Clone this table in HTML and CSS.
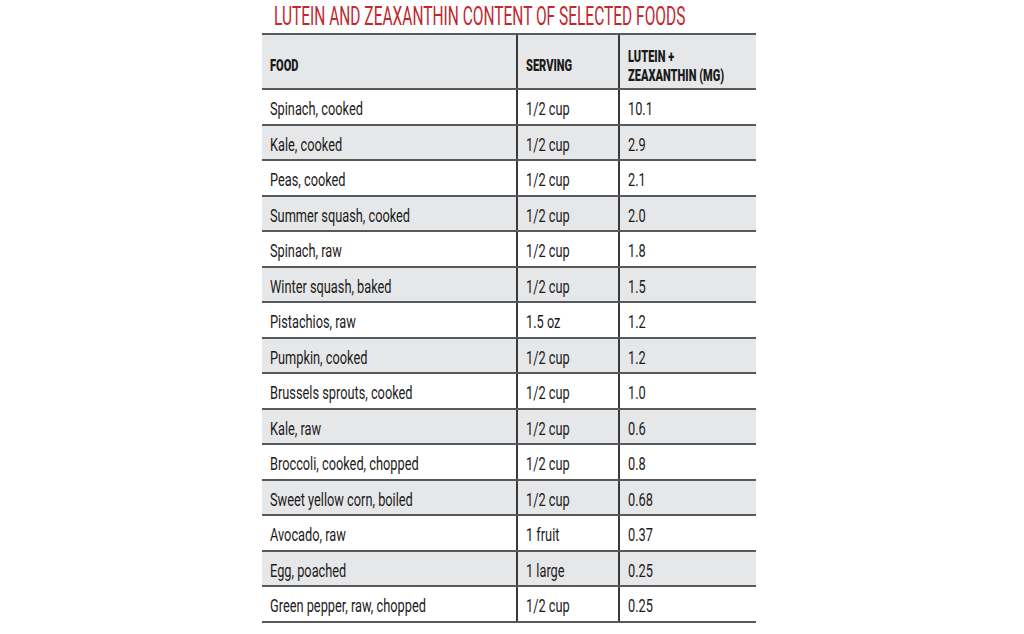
FILE: index.html
```html
<!DOCTYPE html>
<html lang="en">
<head>
<meta charset="utf-8">
<title>Lutein and Zeaxanthin Content of Selected Foods</title>
<link rel="stylesheet" href="styles.css">
</head>
<body>
<div class="page">
  <div class="chart">
    <h1 class="title"><span class="narrow-title">LUTEIN AND ZEAXANTHIN CONTENT OF SELECTED FOODS</span></h1>
    <table class="foods">
      <thead>
        <tr>
          <th class="c-food"><span class="narrow-head">FOOD</span></th>
          <th class="c-serv"><span class="narrow-head">SERVING</span></th>
          <th class="c-amt"><span class="narrow-head">LUTEIN +<br>ZEAXANTHIN (MG)</span></th>
        </tr>
      </thead>
      <tbody>
        <tr><td><span class="narrow">Spinach, cooked</span></td><td><span class="narrow">1/2 cup</span></td><td><span class="narrow">10.1</span></td></tr>
        <tr><td><span class="narrow">Kale, cooked</span></td><td><span class="narrow">1/2 cup</span></td><td><span class="narrow">2.9</span></td></tr>
        <tr><td><span class="narrow">Peas, cooked</span></td><td><span class="narrow">1/2 cup</span></td><td><span class="narrow">2.1</span></td></tr>
        <tr><td><span class="narrow">Summer squash, cooked</span></td><td><span class="narrow">1/2 cup</span></td><td><span class="narrow">2.0</span></td></tr>
        <tr><td><span class="narrow">Spinach, raw</span></td><td><span class="narrow">1/2 cup</span></td><td><span class="narrow">1.8</span></td></tr>
        <tr><td><span class="narrow">Winter squash, baked</span></td><td><span class="narrow">1/2 cup</span></td><td><span class="narrow">1.5</span></td></tr>
        <tr><td><span class="narrow">Pistachios, raw</span></td><td><span class="narrow">1.5 oz</span></td><td><span class="narrow">1.2</span></td></tr>
        <tr><td><span class="narrow">Pumpkin, cooked</span></td><td><span class="narrow">1/2 cup</span></td><td><span class="narrow">1.2</span></td></tr>
        <tr><td><span class="narrow">Brussels sprouts, cooked</span></td><td><span class="narrow">1/2 cup</span></td><td><span class="narrow">1.0</span></td></tr>
        <tr><td><span class="narrow">Kale, raw</span></td><td><span class="narrow">1/2 cup</span></td><td><span class="narrow">0.6</span></td></tr>
        <tr><td><span class="narrow">Broccoli, cooked, chopped</span></td><td><span class="narrow">1/2 cup</span></td><td><span class="narrow">0.8</span></td></tr>
        <tr><td><span class="narrow">Sweet yellow corn, boiled</span></td><td><span class="narrow">1/2 cup</span></td><td><span class="narrow">0.68</span></td></tr>
        <tr><td><span class="narrow">Avocado, raw</span></td><td><span class="narrow">1 fruit</span></td><td><span class="narrow">0.37</span></td></tr>
        <tr><td><span class="narrow">Egg, poached</span></td><td><span class="narrow">1 large</span></td><td><span class="narrow">0.25</span></td></tr>
        <tr><td><span class="narrow">Green pepper, raw, chopped</span></td><td><span class="narrow">1/2 cup</span></td><td><span class="narrow">0.25</span></td></tr>
      </tbody>
    </table>
  </div>
</div>
</body>
</html>
```
FILE: styles.css
```css
html, body {
  margin: 0;
  padding: 0;
  background: #ffffff;
}

.page {
  width: 1024px;
  height: 634px;
  padding-left: 262px;
  box-sizing: border-box;
  overflow: hidden;
}

.chart {
  width: 492px;
  font-family: Roboto, "Liberation Sans", sans-serif;
  color: #1c1a1b;
}

.title {
  margin: 0;
  padding: 3px 0 0 12px;
  height: 30px;
  box-sizing: border-box;
  font-size: 25px;
  line-height: 27px;
  font-weight: normal;
  color: #c1272d;
  white-space: nowrap;
}

.narrow-title {
  display: inline-block;
  transform: scaleX(0.62);
  transform-origin: left center;
}

.narrow-head {
  display: inline-block;
  transform: scaleX(0.69);
  transform-origin: left center;
}

.narrow {
  display: inline-block;
  transform: scaleX(0.73);
  transform-origin: left center;
}

.foods {
  width: 492px;
  border-collapse: collapse;
  margin-top: 3px;
  table-layout: fixed;
}

.foods th,
.foods td {
  border-top: 2px solid #58595b;
  border-bottom: 2px solid #58595b;
  border-left: 2px solid #3a3a3c;
  text-align: left;
  vertical-align: middle;
  padding: 0 0 0 8px;
  white-space: nowrap;
}

.foods th:first-child,
.foods td:first-child {
  border-left: none;
}

.c-food { width: 246px; }
.c-serv { width: 92px; }
.c-amt { width: 128px; }

.foods thead tr {
  height: 55px;
  background: #e6e7e8;
}

.foods th {
  font-size: 16px;
  line-height: 19px;
  font-weight: 900;
  padding-top: 8px;
}

.foods tbody tr {
  height: 35.5px;
}

.foods tbody tr:nth-child(even) {
  background: #e6e7e8;
}

.foods td {
  font-size: 17.5px;
  line-height: 20px;
  padding-top: 5px;
}
```
